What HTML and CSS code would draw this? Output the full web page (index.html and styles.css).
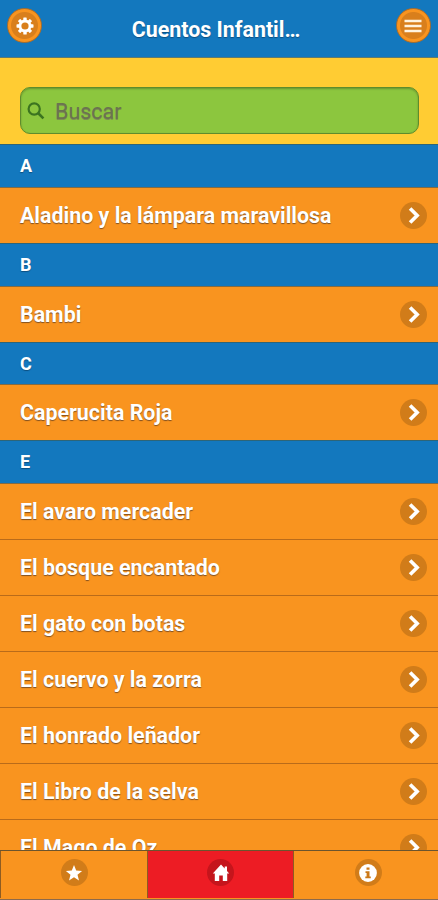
FILE: index.html
```html
<!DOCTYPE html>
<html lang="es">
<head>
<meta charset="utf-8">
<title>Cuentos Infantiles</title>
<link rel="stylesheet" href="styles.css">
</head>
<body>
<svg class="defs" width="0" height="0">
  <symbol id="chevron" viewBox="0 0 14 14"><path d="M4.2 1.2 10 7l-5.800 5.800" fill="none" stroke="#fff" stroke-width="3"/></symbol>
</svg>
<div class="app">
  <header class="header">
    <button class="round" aria-label="Ajustes"><svg width="18" height="18" viewBox="0 0 18 18"><g fill="#fff"><g><rect x="7.300" y="0.500" width="3.400" height="17" rx=".6"/><rect x="0.500" y="7.300" width="17" height="3.400" rx=".6"/></g><g transform="rotate(45 9 9)"><rect x="7.300" y="0.500" width="3.400" height="17" rx=".6"/><rect x="0.500" y="7.300" width="17" height="3.400" rx=".6"/></g><circle cx="9" cy="9" r="6.500"/></g><circle cx="9" cy="9" r="3.600" fill="#d97f1c"/></svg></button>
    <h1 class="title">Cuentos Infantil…</h1>
    <button class="round" aria-label="Menú"><svg width="18" height="18" viewBox="0 0 18 18"><path d="M.5 4h17M.5 9h17M.5 14h17" stroke="#fff3df" stroke-width="2.600"/></svg></button>
  </header>
  <div class="search">
    <label class="field">
      <svg width="18" height="18" viewBox="0 0 18 18"><g fill="none" stroke="#3c7420" stroke-width="2.200"><circle cx="7.200" cy="7" r="5.600"/><path d="m11 11 5.400 5.400" stroke-width="2.600"/></g></svg>
      <span>Buscar</span>
    </label>
  </div>
  <main class="list">
    <h2 class="divider">A</h2>
    <a class="item first">Aladino y la lámpara maravillosa<i class="disc"><svg><use href="#chevron"/></svg></i></a>
    <h2 class="divider">B</h2>
    <a class="item first">Bambi<i class="disc"><svg><use href="#chevron"/></svg></i></a>
    <h2 class="divider">C</h2>
    <a class="item first">Caperucita Roja<i class="disc"><svg><use href="#chevron"/></svg></i></a>
    <h2 class="divider">E</h2>
    <a class="item first">El avaro mercader<i class="disc"><svg><use href="#chevron"/></svg></i></a>
    <a class="item">El bosque encantado<i class="disc"><svg><use href="#chevron"/></svg></i></a>
    <a class="item">El gato con botas<i class="disc"><svg><use href="#chevron"/></svg></i></a>
    <a class="item">El cuervo y la zorra<i class="disc"><svg><use href="#chevron"/></svg></i></a>
    <a class="item">El honrado leñador<i class="disc"><svg><use href="#chevron"/></svg></i></a>
    <a class="item">El Libro de la selva<i class="disc"><svg><use href="#chevron"/></svg></i></a>
    <a class="item">El Mago de Oz<i class="disc"><svg><use href="#chevron"/></svg></i></a>
  </main>
  <nav class="tabs">
    <a class="tab"><i class="disc"><svg class="big" viewBox="0 0 18 18"><path d="m9 1 2.200 5.600 5.900.3-4.600 3.800 1.500 5.800L9 13.200l-5 3.300 1.500-5.800L.9 6.900l5.900-.3z" fill="#fff"/></svg></i></a>
    <a class="tab active"><i class="disc"><svg class="big" viewBox="0 0 18 18"><path d="M9 .5.800 9.500h2V17h4.400v-5.500h3.600V17h4.400V9.500h2L15 7V2.500h-2.300v2z" fill="#fff"/></svg></i></a>
    <a class="tab last"><i class="disc"><svg class="big" viewBox="0 0 18 18"><circle cx="9" cy="9" r="8.900" fill="#fff"/><path d="M7.500 3.500h3v2.300h-3zM6.500 7.200h4v5.300h1.300v1.800H6.300v-1.800h1.300V9H6.500z" fill="#cc7918"/></svg></i></a>
  </nav>
</div>
</body>
</html>
```
FILE: styles.css
```css
* { box-sizing: border-box; }
body { margin: 0; font-family: Roboto, "Liberation Sans", sans-serif; }
.defs { display: block; }
.app {
  display: flex;
  flex-direction: column;
  height: 900px;
  overflow: hidden;
  background: #f9941f;
  color: #fff;
}
.header {
  flex: none;
  height: 58px;
  display: flex;
  align-items: flex-start;
  justify-content: space-between;
  padding: 8px 7px 0 7px;
  background: #1378be;
  border-bottom: 1px solid #5f7a70;
}
.round {
  display: flex;
  align-items: center;
  justify-content: center;
  width: 35px;
  height: 35px;
  padding: 0;
  border: 1px solid #ad6c28;
  border-radius: 50%;
  background: radial-gradient(circle, #d97f1c 13px, #f9941f 14px);
}
.title {
  margin: 0;
  padding: 9px 6px 0 0;
  font-size: 21.400px;
  line-height: 26px;
  font-weight: 700;
  text-shadow: 0 1px 1px #0c4f80;
}
.search {
  flex: none;
  height: 86.400px;
  padding: 29px 19px 0 20px;
  background: #ffcc33;
}
.field {
  display: flex;
  align-items: center;
  height: 47px;
  padding-left: 6px;
  gap: 10px;
  border: 1px solid #5f8c2c;
  border-radius: 10px;
  background: #8cc63e;
  box-shadow: inset 0 1px 2px rgba(0, 0, 0, .25);
  color: #6b7350;
  font-size: 21.500px;
}
.field span { padding-top: 1px; text-shadow: 0 1px 0 #7c8f52; }
.list { flex: 1; min-height: 0; overflow: hidden; }
.divider {
  height: 42.670px;
  margin: 0;
  padding-left: 20px;
  border-top: 1px solid #2d6578;
  background: #1378be;
  font-size: 18px;
  line-height: 42px;
  text-shadow: 0 1px 1px #0c4f80;
}
.item {
  display: flex;
  align-items: center;
  justify-content: space-between;
  height: 56px;
  padding: 0 11px 0 20px;
  border-top: 1px solid #b96b1a;
  background: #f9941f;
  font-size: 21.400px;
  font-weight: 700;
  text-shadow: 0 1px 1px #805022;
}
.first { border-top-color: #816b45; }
.disc {
  display: flex;
  align-items: center;
  justify-content: center;
  width: 27px;
  height: 27px;
  border-radius: 50%;
  background: #d17c19;
}
.disc svg { width: 17px; height: 17px; }
.disc .big { width: 18px; height: 18px; }
.tabs {
  flex: none;
  display: grid;
  grid-template-columns: 147px 146px 1fr;
  height: 50px;
  padding-bottom: 1px;
  border-top: 1px solid #6b542e;
  border-bottom: 1px solid #8c6a4c;
}
.tab {
  display: flex;
  justify-content: center;
  padding-top: 8px;
  border-left: 1px solid #8e5c22;
  background: #f9941f;
}
.last { padding-left: 4px; }
.active { background: #ed1c24; }
.active .disc { background: #c5151c; }
```
